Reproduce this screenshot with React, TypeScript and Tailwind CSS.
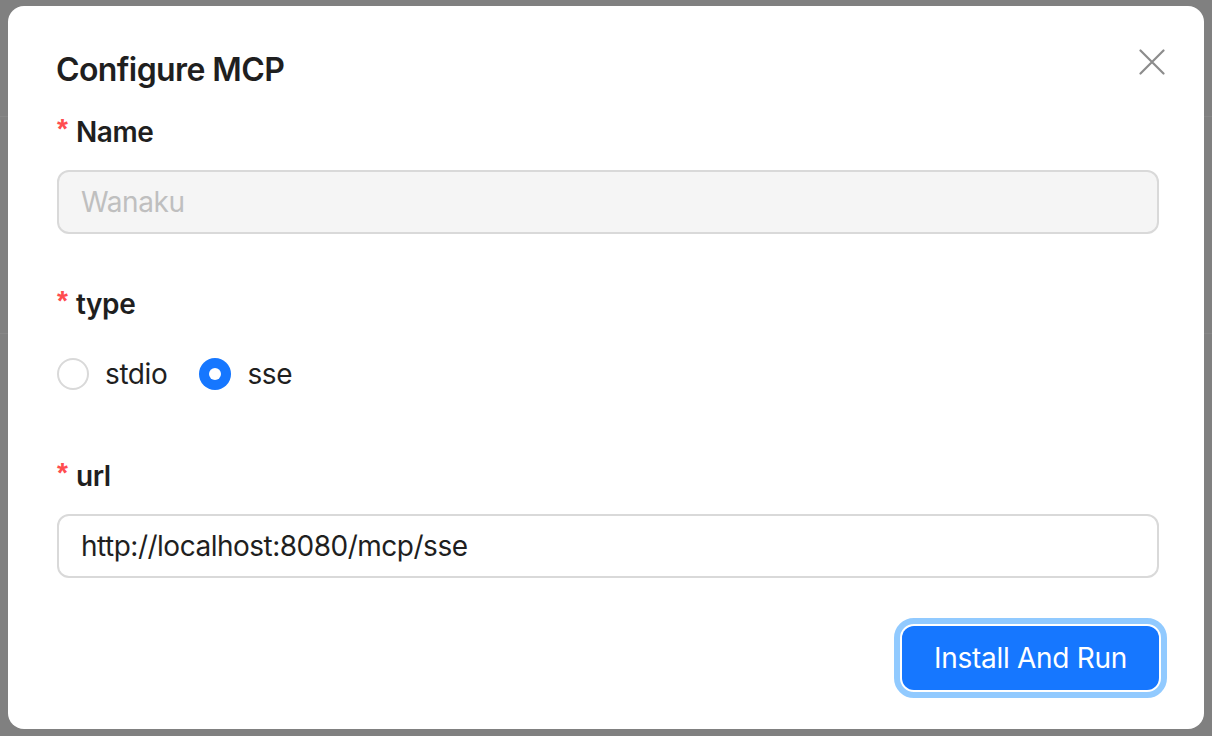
import React from "react";

const font = { fontFamily: "Inter, 'Noto Sans', 'Liberation Sans', sans-serif" };

function Label({ text }: { text: string }) {
  return (
    <div className="flex h-[44px] items-center mb-[16px]">
      <span className="text-[#ff4d4f] text-[28px] font-bold leading-none mr-[8px] -mt-[6px]" style={{ fontFamily: "'Liberation Sans', sans-serif" }}>*</span>
      <span className="text-[28px] font-semibold text-[#1f1f1f] tracking-[-0.4px]">{text}</span>
    </div>
  );
}

export default function App() {
  return (
    <div className="relative w-[1212px] h-[736px] bg-[#808080] overflow-hidden pt-[6px] pl-[8px]" style={font}>
      <div className="absolute left-0 right-0 top-[116px] h-[1px] bg-[#878787]" />
      <div className="absolute left-0 right-0 top-[333px] h-[1px] bg-[#878787]" />
      <div className="relative w-[1196px] h-[723px] bg-white rounded-[16px] px-[49px] pt-[40px]">
        <button className="absolute right-[34px] top-[38px] w-[36px] h-[36px] flex items-center justify-center text-[#8c8c8c]">
          <svg width="26" height="26" viewBox="0 0 26 26" fill="none" stroke="currentColor" strokeWidth="2.2" strokeLinecap="round">
            <path d="M1.5 1.5 L24.5 24.5 M24.5 1.5 L1.5 24.5" />
          </svg>
        </button>
        <div className="h-[48px] flex items-center text-[32px] font-semibold text-[#1f1f1f] mb-[16px] tracking-[-0.6px] -ml-[1px]">Configure MCP</div>

        <Label text="Name" />
        <div className="h-[64px] w-[1102px] rounded-[12px] border-2 border-[#d9d9d9] bg-[#f5f5f5] flex items-center px-[22px] text-[28px] text-[#bfbfbf] mb-[48px] tracking-[-0.4px]">
          Wanaku
        </div>

        <Label text="type" />
        <div className="h-[64px] flex items-center mb-[48px] tracking-[-0.4px]">
          <div className="flex items-center mr-[16px]">
            <span className="w-[32px] h-[32px] rounded-full border-2 border-[#d9d9d9] bg-white" />
            <span className="px-[16px] text-[28px] text-[#1f1f1f]">stdio</span>
          </div>
          <div className="flex items-center">
            <span className="w-[32px] h-[32px] rounded-full bg-[#1677ff] flex items-center justify-center">
              <span className="w-[12px] h-[12px] rounded-full bg-white" />
            </span>
            <span className="px-[16px] text-[28px] text-[#1f1f1f]">sse</span>
          </div>
        </div>

        <Label text="url" />
        <div className="h-[64px] w-[1102px] rounded-[12px] border-2 border-[#d9d9d9] bg-white flex items-center px-[22px] text-[28px] text-[#1f1f1f] mb-[48px] tracking-[-0.5px]">
          http://localhost:8080/mcp/sse
        </div>

        <div className="flex justify-end w-[1102px]">
          <button className="h-[64px] w-[257px] rounded-[12px] bg-[#1677ff] text-white text-[28px] tracking-[-0.3px] outline-[6px] outline-solid outline-[#91caff] outline-offset-[2px]">
            Install And Run
          </button>
        </div>
      </div>
    </div>
  );
}
